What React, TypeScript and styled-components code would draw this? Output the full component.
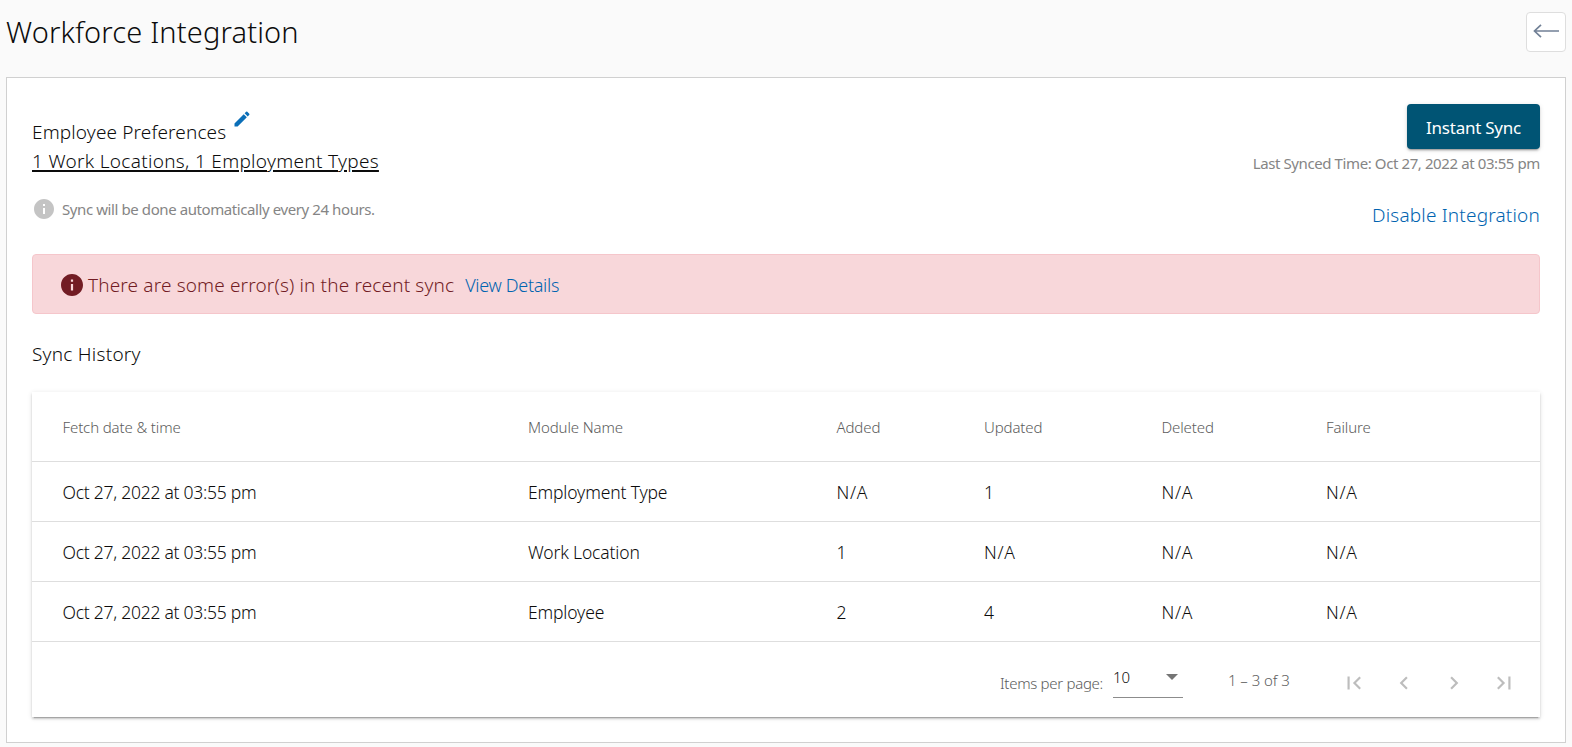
import React from "react";
import styled, { createGlobalStyle, css } from "styled-components";

const Global = createGlobalStyle`
  *, *::before, *::after { box-sizing: border-box; }
  body {
    margin: 0;
    background: #fafafa;
    font-family: "Noto Sans", "Open Sans", sans-serif;
    font-weight: 300;
    color: #0c0c0c;
  }
`;

const Page = styled.main`
  display: flex;
  flex-direction: column;
  height: 747px;
  padding: 12px 6px 4px;
  overflow: hidden;
`;

const Header = styled.header`
  display: flex;
  justify-content: space-between;
  height: 65px;
`;

const Title = styled.h1`
  margin: 0;
  font-size: 29px;
  line-height: 40px;
  font-weight: 300;
  letter-spacing: 0.15px;
  white-space: nowrap;
`;

const BackButton = styled.button`
  display: flex;
  align-items: center;
  justify-content: center;
  width: 40px;
  height: 40px;
  padding: 0 0 2px;
  border: 1px solid #dedede;
  border-radius: 4px;
  background: #fff;
`;

const Panel = styled.section`
  display: flex;
  flex-direction: column;
  height: 666px;
  padding: 26px 25px 0;
  border: 1px solid #d0d0d0;
  background: #fff;
`;

const Summary = styled.div`
  display: flex;
  justify-content: space-between;
  height: 150px;
`;

const SummaryLeft = styled.div`
  display: flex;
  flex-direction: column;
  align-items: flex-start;
`;

const SummaryRight = styled.div`
  display: flex;
  flex-direction: column;
  align-items: flex-end;
`;

const textLine = css<{ $track?: number }>`
  letter-spacing: ${(p) => p.$track ?? 0}px;
  white-space: nowrap;
`;

const Preferences = styled.div`
  display: flex;
  gap: 6px;
  padding-top: 13px;
  height: 42px;
`;

const Label = styled.span<{ $track?: number }>`
  ${textLine}
  font-size: 19px;
  line-height: 30px;
`;

const EditIcon = styled.svg`
  margin-top: -8px;
`;

const PreferencesLink = styled.a<{ $track?: number }>`
  ${textLine}
  font-size: 19px;
  line-height: 30px;
  text-decoration: underline;
  text-decoration-thickness: 2px;
  text-underline-offset: 2px;
`;

const Hint = styled.p<{ $track?: number }>`
  ${textLine}
  display: flex;
  align-items: center;
  gap: 8px;
  margin: 21px 0 0;
  padding-left: 2px;
  font-size: 15px;
  line-height: 24px;
  font-weight: 400;
  color: #858585;
`;

const SyncButton = styled.button`
  width: 133px;
  height: 45px;
  padding: 2px 0 0;
  border: 0;
  border-radius: 4px;
  background: #005474;
  color: #fff;
  font: 400 17px/43px "Noto Sans", sans-serif;
  letter-spacing: -0.25px;
  box-shadow: 0 3px 1px -2px rgba(0, 0, 0, 0.2), 0 2px 2px rgba(0, 0, 0, 0.14),
    0 1px 5px rgba(0, 0, 0, 0.12);
`;

const SyncedTime = styled.span<{ $track?: number }>`
  ${textLine}
  margin-top: 2px;
  font-size: 15px;
  line-height: 24px;
  font-weight: 400;
  color: #858585;
`;

const DisableLink = styled.a<{ $track?: number }>`
  ${textLine}
  margin-top: 25px;
  font-size: 19px;
  line-height: 30px;
  color: #0064b0;
`;

const Alert = styled.div`
  display: flex;
  align-items: center;
  height: 60px;
  padding: 2px 0 0 28px;
  border: 1px solid #f5c6cb;
  border-radius: 4px;
  background: #f8d7da;
  color: #721c24;
`;

const AlertText = styled.span<{ $track?: number }>`
  ${textLine}
  margin-left: 5px;
  font-size: 19px;
  line-height: 30px;
`;

const AlertLink = styled.a<{ $track?: number }>`
  ${textLine}
  margin-left: 11px;
  font-size: 18px;
  line-height: 30px;
  color: #0064b0;
`;

const SectionTitle = styled.h2<{ $track?: number }>`
  ${textLine}
  margin: 25px 0 23px;
  font-size: 19px;
  line-height: 30px;
  font-weight: 300;
`;

const Card = styled.div`
  height: 325px;
  background: #fff;
  box-shadow: 0 3px 1px -2px rgba(0, 0, 0, 0.2), 0 2px 2px rgba(0, 0, 0, 0.14),
    0 1px 5px rgba(0, 0, 0, 0.12);
`;

const Row = styled.div<{ $head?: boolean }>`
  display: grid;
  grid-template-columns: 465.5px 308.5px 147.5px 177.5px 164.5px 1fr;
  align-items: center;
  height: ${(p) => (p.$head ? 70 : 60)}px;
  padding: ${(p) => (p.$head ? 1 : 0)}px 0 0 30.5px;
  border-bottom: 1px solid #dedede;
  font-size: ${(p) => (p.$head ? 15 : 17.5)}px;
  color: ${(p) => (p.$head ? "#5c5c5c" : "#0c0c0c")};
`;

const Cell = styled.span<{ $track?: number }>`
  ${textLine}
`;

const Paginator = styled.div`
  display: flex;
  height: 75px;
  padding-left: 968px;
  font-size: 15px;
  color: #5c5c5c;
`;

const PerPage = styled.span<{ $track?: number }>`
  ${textLine}
  width: 113px;
  margin-top: 29px;
  line-height: 24px;
`;

const Select = styled.div`
  display: flex;
  justify-content: space-between;
  align-items: center;
  width: 70px;
  height: 32px;
  margin-top: 24px;
  padding: 0 5px 10px 0;
  border-bottom: 1px solid #8c8c8c;
  color: #0c0c0c;
`;

const Range = styled.span<{ $track?: number }>`
  ${textLine}
  width: 101px;
  margin: 26px 0 0 45px;
  line-height: 24px;
`;

const Pages = styled.div`
  display: flex;
  margin-top: 16px;
`;

const PageButton = styled.button`
  display: flex;
  align-items: center;
  justify-content: center;
  width: 50px;
  height: 50px;
  padding: 0;
  border: 0;
  background: none;
  color: #bdbdbd;
`;

const InfoGlyph = ({ size, color }: { size: number; color: string }) => (
  <svg width={size} height={size} viewBox="2 2 20 20" fill={color}>
    <path d="M12 2C6.48 2 2 6.48 2 12s4.48 10 10 10 10-4.48 10-10S17.52 2 12 2zm1 15h-2v-6h2v6zm0-8h-2V7h2v2z" />
  </svg>
);

const columns = ["Fetch date & time", "Module Name", "Added", "Updated", "Deleted", "Failure"];

const history = [
  ["Oct 27, 2022 at 03:55 pm", "Employment Type", "N/A", "1", "N/A", "N/A"],
  ["Oct 27, 2022 at 03:55 pm", "Work Location", "1", "N/A", "N/A", "N/A"],
  ["Oct 27, 2022 at 03:55 pm", "Employee", "2", "4", "N/A", "N/A"],
];

const pageIcons = [
  { label: "First page", d: "M18.41 16.59L13.82 12l4.59-4.59L17 6l-6 6 6 6zM6 6h2v12H6z" },
  { label: "Previous page", d: "M15.41 7.41L14 6l-6 6 6 6 1.41-1.41L10.83 12z" },
  { label: "Next page", d: "M10 6L8.59 7.41 13.17 12l-4.58 4.59L10 18l6-6z" },
  { label: "Last page", d: "M5.59 7.41L10.18 12l-4.59 4.59L7 18l6-6-6-6zM16 6h2v12h-2z" },
];

export default function App() {
  return (
    <Page>
      <Global />
      <Header>
        <Title>Workforce Integration</Title>
        <BackButton aria-label="Back">
          <svg width="26" height="14" viewBox="0 0 26 14" fill="none" stroke="#718096" strokeWidth="1.7">
            <path d="M26 7H1.5M8 0.8L1.5 7L8 13.2" />
          </svg>
        </BackButton>
      </Header>
      <Panel>
        <Summary>
          <SummaryLeft>
            <Preferences>
              <Label $track={0.14}>Employee Preferences</Label>
              <EditIcon width="20" height="20" viewBox="0 0 24 24" fill="#0b6fb8">
                <path d="M3 17.25V21h3.75L17.81 9.94l-3.75-3.75L3 17.25zM20.71 7.04a1 1 0 0 0 0-1.41l-2.34-2.34a1 1 0 0 0-1.41 0l-1.83 1.83 3.75 3.75 1.83-1.83z" />
              </EditIcon>
            </Preferences>
            <PreferencesLink $track={0.31}>1 Work Locations, 1 Employment Types</PreferencesLink>
            <Hint $track={-0.41}>
              <InfoGlyph size={20} color="#c4c4c4" />
              Sync will be done automatically every 24 hours.
            </Hint>
          </SummaryLeft>
          <SummaryRight>
            <SyncButton>Instant Sync</SyncButton>
            <SyncedTime $track={-0.4}>Last Synced Time: Oct 27, 2022 at 03:55 pm</SyncedTime>
            <DisableLink $track={0.18}>Disable Integration</DisableLink>
          </SummaryRight>
        </Summary>
        <Alert>
          <InfoGlyph size={22} color="#721c24" />
          <AlertText $track={0.15}>There are some error(s) in the recent sync</AlertText>
          <AlertLink $track={-0.3}>View Details</AlertLink>
        </Alert>
        <SectionTitle $track={0.25}>Sync History</SectionTitle>
        <Card>
          <Row $head>
            {columns.map((name) => (
              <Cell key={name} $track={-0.12}>{name}</Cell>
            ))}
          </Row>
          {history.map((row, r) => (
            <Row key={r}>
              {row.map((value, c) => (
                <Cell key={c} $track={value === "N/A" ? 0.7 : c === 0 ? -0.26 : -0.15}>
                  {value}
                </Cell>
              ))}
            </Row>
          ))}
          <Paginator>
            <PerPage $track={-0.3}>Items per page:</PerPage>
            <Select>
              10
              <svg width="12" height="6" viewBox="0 0 12 6" fill="#757575">
                <path d="M0 0h12L6 6z" />
              </svg>
            </Select>
            <Range $track={-0.05}>1 – 3 of 3</Range>
            <Pages>
              {pageIcons.map((icon) => (
                <PageButton key={icon.label} aria-label={icon.label}>
                  <svg width="26" height="26" viewBox="0 0 24 24" fill="currentColor">
                    <path d={icon.d} />
                  </svg>
                </PageButton>
              ))}
            </Pages>
          </Paginator>
        </Card>
      </Panel>
    </Page>
  );
}
